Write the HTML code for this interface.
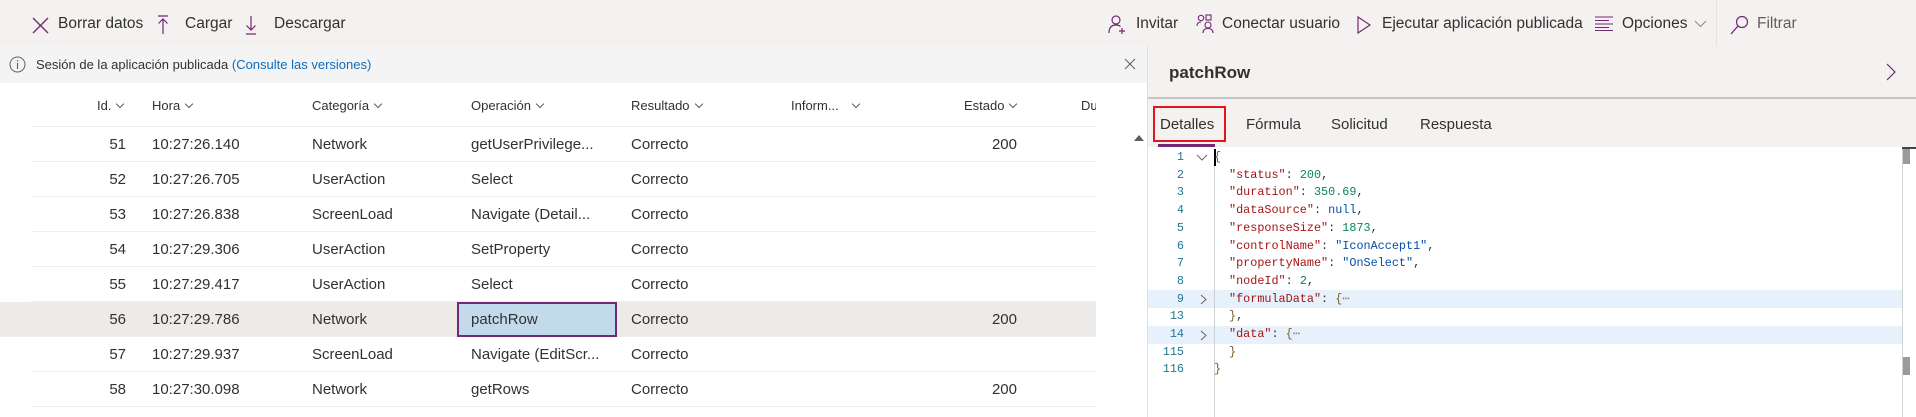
<!DOCTYPE html>
<html><head><meta charset="utf-8"><style>
*{margin:0;padding:0;box-sizing:border-box}
body{width:1916px;height:417px;overflow:hidden;background:#fff;font-family:"Liberation Sans",sans-serif;color:#323130;position:relative}
.a{position:absolute;white-space:nowrap}
.tb{left:0;top:0;width:1916px;height:46px;background:#f3f2f1;box-shadow:0 1px 3px rgba(0,0,0,.08)}
.tbt{font-size:15.5px;top:15px;color:#323130}
.ic{position:absolute}
.info{left:0;top:46px;width:1147px;height:37px;background:#f4f4f4}
.hd{font-size:13px;top:98px;color:#323130}
.chev{display:inline-block;width:6px;height:6px;border-right:1px solid #605e5c;border-bottom:1px solid #605e5c;transform:rotate(45deg);margin-left:6px;position:relative;top:-3px}
.row{position:absolute;left:0;width:1096px;height:35px;border-bottom:1px solid #f0eeec}
.rp{left:1147px;top:46px;width:769px;height:371px;background:#f3f2f1;border-left:1px solid #e1dfdd}
.code{left:1148px;top:147px;width:768px;height:270px;background:#fff}
.cl{position:absolute;left:1148px;width:754px;height:17.7px;font-family:"Liberation Mono",monospace;font-size:11.8px;line-height:17.7px;white-space:pre}
.ln{position:absolute;right:718px;color:#237893;text-align:right}
.k{color:#a31515}.n{color:#098658}.s{color:#0451a5}.b{color:#795e26}
.tab{font-size:15px;top:116px;color:#323130}
</style></head><body>
<div class="a tb"></div>
<svg class="ic" style="left:32px;top:17px" width="17" height="17" viewBox="0 0 17 17"><path d="M1 1L16 16M16 1L1 16" stroke="#742774" stroke-width="1.4" fill="none"/></svg>
<div class="a tbt" style="left:58px">Borrar datos</div>
<svg class="ic" style="left:157px;top:15px" width="12" height="20" viewBox="0 0 12 20"><path d="M1 1H11M6 4V19M1.5 8.5L6 4L10.5 8.5" stroke="#742774" stroke-width="1.2" fill="none"/></svg>
<div class="a tbt" style="left:185px">Cargar</div>
<svg class="ic" style="left:245px;top:15px" width="12" height="20" viewBox="0 0 12 20"><path d="M1 19H11M6 1V15M1.5 10.5L6 15L10.5 10.5" stroke="#742774" stroke-width="1.2" fill="none"/></svg>
<div class="a tbt" style="left:274px">Descargar</div>
<svg class="ic" style="left:1108px;top:14px" width="20" height="20" viewBox="0 0 20 20"><circle cx="8" cy="6" r="4" stroke="#742774" stroke-width="1.2" fill="none"/><path d="M1 19C1 13 4 11 8 11C10 11 11.5 11.6 12.5 12.5M14 14V20M11 17H17" stroke="#742774" stroke-width="1.2" fill="none"/></svg>
<div class="a tbt" style="left:1136px">Invitar</div>
<svg class="ic" style="left:1196px;top:14px" width="20" height="20" viewBox="0 0 20 20"><circle cx="5" cy="4" r="2.7" stroke="#742774" stroke-width="1.1" fill="none"/><path d="M1 12C1 9 2.5 8 5 8" stroke="#742774" stroke-width="1.1" fill="none"/><rect x="10" y="1" width="5" height="5" stroke="#742774" stroke-width="1.1" fill="none"/><circle cx="12" cy="11" r="3" stroke="#742774" stroke-width="1.1" fill="none"/><path d="M7 19C7 15.5 9 14.5 12 14.5C15 14.5 17 15.5 17 19" stroke="#742774" stroke-width="1.1" fill="none"/></svg>
<div class="a tbt" style="left:1222px">Conectar usuario</div>
<svg class="ic" style="left:1357px;top:16px" width="14" height="18" viewBox="0 0 14 18"><path d="M1 1L13 9L1 17Z" stroke="#742774" stroke-width="1.2" fill="none"/></svg>
<div class="a tbt" style="left:1382px">Ejecutar aplicación publicada</div>
<svg class="ic" style="left:1595px;top:16px" width="19" height="15" viewBox="0 0 19 15"><path d="M0 1H18M0 4.5H14M0 8H18M0 11.5H14M0 14.5H18" stroke="#742774" stroke-width="1" fill="none"/></svg>
<div class="a tbt" style="left:1622px">Opciones</div>
<svg class="ic" style="left:1694px;top:20px" width="13" height="8" viewBox="0 0 13 8"><path d="M1 1L6.5 6.5L12 1" stroke="#8a8886" stroke-width="1" fill="none"/></svg>
<div class="a" style="left:1716px;top:0;width:1px;height:46px;background:#e6e4e2"></div>
<svg class="ic" style="left:1730px;top:15px" width="19" height="20" viewBox="0 0 19 20"><circle cx="12" cy="7" r="5.5" stroke="#742774" stroke-width="1.2" fill="none"/><path d="M8 11L1 19" stroke="#742774" stroke-width="1.3"/></svg>
<div class="a tbt" style="left:1757px;color:#605e5c">Filtrar</div>

<div class="a info"></div>
<svg class="ic" style="left:9px;top:56px" width="17" height="17" viewBox="0 0 17 17"><circle cx="8.5" cy="8.5" r="7.5" stroke="#605e5c" stroke-width="1" fill="none"/><path d="M8.5 7V13M8.5 4V5.5" stroke="#605e5c" stroke-width="1.1"/></svg>
<div class="a" style="left:36px;top:57px;font-size:13px;color:#323130">Sesión de la aplicación publicada <span style="color:#0f6cbd">(Consulte las versiones)</span></div>
<svg class="ic" style="left:1124px;top:58px" width="12" height="12" viewBox="0 0 12 12"><path d="M1 1L11 11M11 1L1 11" stroke="#605e5c" stroke-width="1" fill="none"/></svg>

<div class="a hd" style="left:97px">Id.<span class="chev"></span></div>
<div class="a hd" style="left:152px">Hora<span class="chev"></span></div>
<div class="a hd" style="left:312px">Categoría<span class="chev"></span></div>
<div class="a hd" style="left:471px">Operación<span class="chev"></span></div>
<div class="a hd" style="left:631px">Resultado<span class="chev"></span></div>
<div class="a hd" style="left:791px">Inform...</div><div class="a hd" style="left:847px"><span class="chev"></span></div>
<div class="a hd" style="left:964px">Estado<span class="chev"></span></div>
<div class="a hd" style="left:1081px;width:15px;overflow:hidden">Durac</div>
<div class="a" style="left:31px;top:126px;width:1065px;height:1px;background:#edebe9"></div>

<div class="row" style="top:127px;left:31px;width:1065px"></div>
<div class="row" style="top:162px;left:31px;width:1065px"></div>
<div class="row" style="top:197px;left:31px;width:1065px"></div>
<div class="row" style="top:232px;left:31px;width:1065px"></div>
<div class="row" style="top:267px;left:31px;width:1065px"></div>
<div class="row" style="top:302px;left:0;width:1096px;background:#edebe9"></div>
<div class="row" style="top:337px;left:31px;width:1065px"></div>
<div class="row" style="top:372px;left:31px;width:1065px"></div>
<div class="a" style="left:457px;top:302px;width:160px;height:35px;background:#c1dbed;border:2px solid #742774"></div>

<div style="position:absolute;left:0;top:0;font-size:15px">
<div class="a" style="top:136px;left:0;width:126px;text-align:right">51</div>
<div class="a" style="top:171px;left:0;width:126px;text-align:right">52</div>
<div class="a" style="top:206px;left:0;width:126px;text-align:right">53</div>
<div class="a" style="top:241px;left:0;width:126px;text-align:right">54</div>
<div class="a" style="top:276px;left:0;width:126px;text-align:right">55</div>
<div class="a" style="top:311px;left:0;width:126px;text-align:right">56</div>
<div class="a" style="top:346px;left:0;width:126px;text-align:right">57</div>
<div class="a" style="top:381px;left:0;width:126px;text-align:right">58</div>

<div class="a" style="top:136px;left:152px">10:27:26.140</div>
<div class="a" style="top:171px;left:152px">10:27:26.705</div>
<div class="a" style="top:206px;left:152px">10:27:26.838</div>
<div class="a" style="top:241px;left:152px">10:27:29.306</div>
<div class="a" style="top:276px;left:152px">10:27:29.417</div>
<div class="a" style="top:311px;left:152px">10:27:29.786</div>
<div class="a" style="top:346px;left:152px">10:27:29.937</div>
<div class="a" style="top:381px;left:152px">10:27:30.098</div>

<div class="a" style="top:136px;left:312px">Network</div>
<div class="a" style="top:171px;left:312px">UserAction</div>
<div class="a" style="top:206px;left:312px">ScreenLoad</div>
<div class="a" style="top:241px;left:312px">UserAction</div>
<div class="a" style="top:276px;left:312px">UserAction</div>
<div class="a" style="top:311px;left:312px">Network</div>
<div class="a" style="top:346px;left:312px">ScreenLoad</div>
<div class="a" style="top:381px;left:312px">Network</div>

<div class="a" style="top:136px;left:471px">getUserPrivilege...</div>
<div class="a" style="top:171px;left:471px">Select</div>
<div class="a" style="top:206px;left:471px">Navigate (Detail...</div>
<div class="a" style="top:241px;left:471px">SetProperty</div>
<div class="a" style="top:276px;left:471px">Select</div>
<div class="a" style="top:311px;left:471px">patchRow</div>
<div class="a" style="top:346px;left:471px">Navigate (EditScr...</div>
<div class="a" style="top:381px;left:471px">getRows</div>

<div class="a" style="top:136px;left:631px">Correcto</div>
<div class="a" style="top:171px;left:631px">Correcto</div>
<div class="a" style="top:206px;left:631px">Correcto</div>
<div class="a" style="top:241px;left:631px">Correcto</div>
<div class="a" style="top:276px;left:631px">Correcto</div>
<div class="a" style="top:311px;left:631px">Correcto</div>
<div class="a" style="top:346px;left:631px">Correcto</div>
<div class="a" style="top:381px;left:631px">Correcto</div>

<div class="a" style="top:136px;left:900px;width:117px;text-align:right">200</div>
<div class="a" style="top:311px;left:900px;width:117px;text-align:right">200</div>
<div class="a" style="top:381px;left:900px;width:117px;text-align:right">200</div>
</div>
<svg class="ic" style="left:1134px;top:135px" width="10" height="6" viewBox="0 0 10 6"><path d="M0 6L5 0L10 6Z" fill="#605e5c"/></svg>

<div class="a rp"></div>
<div class="a" style="left:1169px;top:63px;font-size:17px;font-weight:bold;color:#323130">patchRow</div>
<svg class="ic" style="left:1886px;top:63px" width="10" height="18" viewBox="0 0 10 18"><path d="M1 1L9 9L1 17" stroke="#742774" stroke-width="1.2" fill="none"/></svg>
<div class="a" style="left:1148px;top:97px;width:768px;height:2px;background:#c8c6c4"></div>
<div class="a tab" style="left:1160px">Detalles</div>
<div class="a tab" style="left:1246px">Fórmula</div>
<div class="a tab" style="left:1331px">Solicitud</div>
<div class="a tab" style="left:1420px">Respuesta</div>
<div class="a" style="left:1153px;top:106px;width:73px;height:36px;border:2px solid #e3141c"></div>
<div class="a" style="left:1158px;top:144px;width:57px;height:3px;background:#742774"></div>

<div class="a code"></div>
<div class="a" style="left:1148px;top:290px;width:754px;height:18px;background:#e7f1fc"></div>
<div class="a" style="left:1148px;top:326px;width:754px;height:18px;background:#e7f1fc"></div>
<div class="a" style="left:1214px;top:165px;width:1px;height:252px;background:#d0d0d0"></div>
<div class="a" style="left:1214px;top:149px;width:2px;height:17px;background:#000"></div>
<div class="a" style="left:1902px;top:147px;width:1px;height:270px;background:#d0d0d0"></div>
<div class="a" style="left:1902px;top:147px;width:14px;height:2px;background:#444"></div>
<div class="a" style="left:1903px;top:149px;width:7px;height:15px;background:#9a9a9a"></div>
<div class="a" style="left:1903px;top:357px;width:7px;height:18px;background:#9a9a9a"></div>

<div class="cl" style="top:149px"><span class="ln">1</span><span style="position:absolute;left:66px"><span class="b">{</span></span></div>
<div class="cl" style="top:166.7px"><span class="ln">2</span><span style="position:absolute;left:81px"><span class="k">"status"</span>: <span class="n">200</span>,</span></div>
<div class="cl" style="top:184.4px"><span class="ln">3</span><span style="position:absolute;left:81px"><span class="k">"duration"</span>: <span class="n">350.69</span>,</span></div>
<div class="cl" style="top:202.1px"><span class="ln">4</span><span style="position:absolute;left:81px"><span class="k">"dataSource"</span>: <span class="s">null</span>,</span></div>
<div class="cl" style="top:219.8px"><span class="ln">5</span><span style="position:absolute;left:81px"><span class="k">"responseSize"</span>: <span class="n">1873</span>,</span></div>
<div class="cl" style="top:237.5px"><span class="ln">6</span><span style="position:absolute;left:81px"><span class="k">"controlName"</span>: <span class="s">"IconAccept1"</span>,</span></div>
<div class="cl" style="top:255.2px"><span class="ln">7</span><span style="position:absolute;left:81px"><span class="k">"propertyName"</span>: <span class="s">"OnSelect"</span>,</span></div>
<div class="cl" style="top:272.9px"><span class="ln">8</span><span style="position:absolute;left:81px"><span class="k">"nodeId"</span>: <span class="n">2</span>,</span></div>
<div class="cl" style="top:290.6px"><span class="ln">9</span><span style="position:absolute;left:81px"><span class="k">"formulaData"</span>: <span class="b">{</span><span style="color:#888">⋯</span></span></div>
<div class="cl" style="top:308.3px"><span class="ln">13</span><span style="position:absolute;left:81px"><span class="b">}</span>,</span></div>
<div class="cl" style="top:326px"><span class="ln">14</span><span style="position:absolute;left:81px"><span class="k">"data"</span>: <span class="b">{</span><span style="color:#888">⋯</span></span></div>
<div class="cl" style="top:343.7px"><span class="ln">115</span><span style="position:absolute;left:81px"><span class="b">}</span></span></div>
<div class="cl" style="top:361.4px"><span class="ln">116</span><span style="position:absolute;left:66px"><span class="b">}</span></span></div>

<svg class="ic" style="left:1196px;top:154px" width="12" height="8" viewBox="0 0 12 8"><path d="M1 1L6 6L11 1" stroke="#666" stroke-width="1" fill="none"/></svg>
<svg class="ic" style="left:1200px;top:294px" width="7" height="11" viewBox="0 0 7 11"><path d="M1 1L6 5.5L1 10" stroke="#666" stroke-width="1" fill="none"/></svg>
<svg class="ic" style="left:1200px;top:330px" width="7" height="11" viewBox="0 0 7 11"><path d="M1 1L6 5.5L1 10" stroke="#666" stroke-width="1" fill="none"/></svg>
</body></html>
